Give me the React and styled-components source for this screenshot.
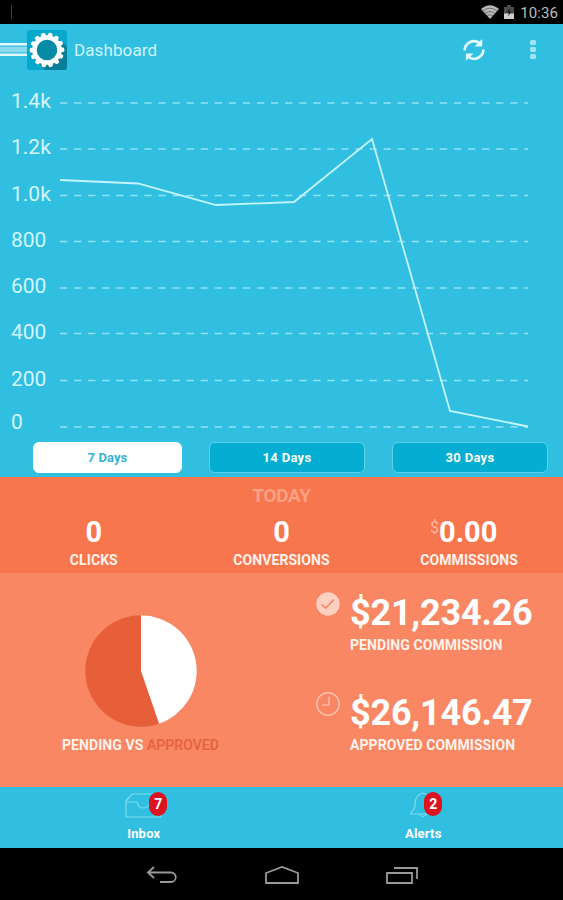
import React from "react"
import styled, { createGlobalStyle } from "styled-components"

const GlobalStyle = createGlobalStyle`
  * { box-sizing: border-box; }
  body {
    margin: 0;
    font-family: Roboto, "Noto Sans", sans-serif;
    color: #fff;
    background: #000;
  }
`

const Screen = styled.main`
  display: flex;
  flex-direction: column;
  width: 563px;
  height: 900px;
  overflow: hidden;
`

const StatusBar = styled.div`
  height: 23.5px;
  padding: 0 5px 0 11px;
  display: flex;
  align-items: center;
  justify-content: space-between;
  background: #000;
`

const StatusTick = styled.span`
  width: 1px;
  height: 14px;
  background: #3c3c3c;
`

const StatusIcons = styled.div`
  display: flex;
  align-items: center;
  height: 22px;
`

const Clock = styled.span`
  margin-left: 6px;
  padding-top: 2px;
  font-size: 15px;
  line-height: 20px;
  letter-spacing: 0.1px;
  color: #bdbdbd;
`

const Header = styled.header`
  height: 53.5px;
  display: flex;
  align-items: center;
  padding-bottom: 1px;
  background: #31bfe1;
`

const Drawer = styled.div`
  width: 27px;
  height: 13px;
  display: flex;
  flex-direction: column;
  justify-content: space-between;
  background: #8adbf0;
  border-top: 2px solid #e2f8ff;
  border-bottom: 2px solid #e2f8ff;

  &::before, &::after {
    content: "";
    height: 1px;
    margin-top: 1px;
    background: #4cc4e3;
  }
  &::after {
    margin: 0 0 1px;
  }
`

const Title = styled.h1`
  flex: 1;
  margin: 0 0 0 7px;
  padding-top: 1px;
  font-size: 17px;
  font-weight: 400;
  letter-spacing: 0.1px;
  color: #d0f5ff;
`

const Actions = styled.div`
  display: flex;
  align-items: center;
  gap: 45px;
  padding-right: 27px;
`

const Dots = styled.div`
  display: grid;
  gap: 2px;

  span {
    width: 6px;
    height: 5px;
    border-radius: 1.5px;
    background: #9fe4f5;
  }
`

const Chart = styled.section`
  display: flex;
  height: 360px;
  background: #31bfe1;
`

const Axis = styled.div`
  width: 60px;
  padding: 1px 0 0 11px;
`

const AxisLabel = styled.div`
  height: 46.3px;
  line-height: 47px;
  font-size: 21px;
  color: #d3f6ff;

  &:last-child {
    margin-top: -3px;
  }
`

const Ranges = styled.div`
  height: 39.5px;
  padding: 5px 15px 0 33px;
  display: grid;
  grid-template-columns: 149px 156px 156px;
  justify-content: space-between;
  align-items: start;
  background: #31bfe1;
`

const RangeButton = styled.button`
  height: 31px;
  padding: 0;
  border: 1px solid ${p => p.$active ? "#fff" : "#5dd0ea"};
  border-radius: 6px;
  background: ${p => p.$active ? "#fff" : "#03aed2"};
  color: ${p => p.$active ? "#31b3d2" : "#fff"};
  font: 700 13px Roboto, sans-serif;
  letter-spacing: ${p => p.$active ? "0.1px" : "0.3px"};
`

const Today = styled.section`
  height: 96.5px;
  padding-top: 9px;
  background: #f8764d;
  text-align: center;
`

const TodayTitle = styled.h2`
  margin: 0;
  font-size: 19px;
  line-height: 20px;
  font-weight: 700;
  letter-spacing: -0.3px;
  color: #fba184;
`

const Stats = styled.div`
  display: grid;
  grid-template-columns: repeat(3, 1fr);
  margin-top: 12px;
`

const StatValue = styled.div`
  display: flex;
  justify-content: center;
  font-size: 29px;
  line-height: 29px;
  font-weight: 700;
  ${p => p.$currency && "padding-right: 11px;"}

  sup {
    font-size: 16px;
    line-height: 20px;
    font-weight: 400;
    color: #fdb49d;
  }
`

const Label = styled.div`
  font-size: 14px;
  line-height: 16px;
  font-weight: 700;
  letter-spacing: 0.07px;
  color: #fff2ec;
`

const StatLabel = styled(Label)`
  margin-top: 5px;
`

const Summary = styled.section`
  height: 214px;
  display: grid;
  grid-template-columns: 316px 1fr;
  background: #f98763;
`

const PieBox = styled.div`
  padding: 41.5px 35px 0 0;
  display: flex;
  flex-direction: column;
  align-items: center;
`

const PieLabel = styled(Label)`
  margin-top: 10px;

  em {
    font-style: normal;
    font-weight: 500;
    color: #e4623d;
  }
`

const Totals = styled.div`
  padding-top: 18.5px;
`

const Total = styled.div`
  height: 100px;
  display: flex;
  align-items: flex-start;
  gap: 10px;
`

const Amount = styled.div`
  height: 45px;
  line-height: 43px;
  font-size: 36px;
  font-weight: 700;
  letter-spacing: -0.2px;
`

const Tabs = styled.nav`
  height: 61px;
  display: grid;
  grid-template-columns: 1fr 1fr;
  padding: 4px 0 0 4px;
  background: #31bfe1;
`

const Tab = styled.a`
  display: flex;
  flex-direction: column;
  align-items: center;
  font-size: 13px;
  line-height: 17px;
  font-weight: 700;
  letter-spacing: 0.2px;
`

const TabIcon = styled.div`
  position: relative;
  height: 34px;
  width: ${p => p.$width}px;

  svg {
    display: block;
  }
`

const Badge = styled.span`
  position: absolute;
  top: 1px;
  left: ${p => p.$left}px;
  width: 18px;
  height: 24px;
  border-radius: 9px;
  background: #dc1320;
  font-size: 14px;
  line-height: 24px;
  text-align: center;
`

const SystemNav = styled.div`
  flex: 1;
  padding-top: 2px;
  display: flex;
  align-items: center;
  justify-content: center;
  gap: 85px;
  background: #000;
`

const ticks = ["1.4k", "1.2k", "1.0k", "800", "600", "400", "200", "0"]
const gridLines = [26, 72, 118.5, 164.5, 211, 256.5, 303.5, 350]
const points = "0,103 78,106.5 156,128 234,125 312,62 390,334 468,349.5"

const stats = [
  { value: "0", label: "CLICKS" },
  { value: "0", label: "CONVERSIONS" },
  { value: "0.00", label: "COMMISSIONS", currency: "$" },
]

const gearTeeth = Array.from({ length: 14 }, (_, i) => i * (360 / 14))

const GearLogo = () => (
  <svg width="40" height="40" viewBox="0 0 40 40">
    <rect width="40" height="40" rx="3" fill="#06a8cc" />
    <path d="M33 10L40 17V37Q40 40 37 40H18L11 33Z" fill="#087f99" />
    <circle cx="20" cy="20" r="14.8" fill="#fff" />
    {gearTeeth.map(a => (
      <path key={a} d="M17.2 7L18.1 3Q20 2.1 21.9 3L22.8 7Z" fill="#fff" transform={`rotate(${a + 12} 20 20)`} />
    ))}
    <circle cx="20" cy="20" r="10.3" fill="#058ba6" />
  </svg>
)

const SyncIcon = () => (
  <svg width="22" height="22" viewBox="0 0 22 22" fill="none" stroke="#e2faff" strokeWidth="2.6">
    <path d="M1.6 11.5A9.4 9.4 0 0 1 16.5 4" />
    <path d="M20.4 10.5A9.4 9.4 0 0 1 5.5 18" />
    <path d="M19.2 0V7.5H11.5Z" fill="#e2faff" stroke="none" />
    <path d="M2.8 22V14.5H10.5Z" fill="#e2faff" stroke="none" />
  </svg>
)

const WifiIcon = () => (
  <svg width="18" height="14" viewBox="0 0 18 14">
    <path d="M0 4Q9 -3.6 18 4L9 14Z" fill="#b8b8b8" />
    <path d="M1.7 6Q9 0.4 16.3 6M3.8 8.5Q9 4.6 14.2 8.5M6 10.8Q9 8.8 12 10.8" fill="none" stroke="#555" strokeWidth=".7" />
  </svg>
)

const BatteryIcon = styled(({ className }) => (
  <svg className={className} width="10" height="14" viewBox="0 0 10 14">
    <path d="M3 0H7V2H10V14H0V2H3Z" fill="#4b4b4b" />
    <path d="M0 8.5H10V14H0Z" fill="#cfcfcf" />
    <path d="M5.8 3L3 7.5H5L4.2 11.5L7.3 6.5H5.3Z" fill="#111" />
  </svg>
))`
  margin-left: 5px;
`

const Pie = () => (
  <svg width="112" height="112" viewBox="0 0 112 112">
    <circle cx="56" cy="56" r="55.7" fill="#e75f38" />
    <path d="M56 56V0.3A55.7 55.7 0 0 1 74.1 108.7Z" fill="#fff" />
  </svg>
)

const CheckIcon = () => (
  <svg width="24" height="24" viewBox="0 0 24 24">
    <circle cx="12" cy="12" r="11.7" fill="#fdd0c1" />
    <path d="M5.5 12.5L9.5 16.2L18 7.5" fill="none" stroke="#f98763" strokeWidth="1.6" />
  </svg>
)

const ClockIcon = () => (
  <svg width="24" height="24" viewBox="0 0 24 24" fill="none" stroke="#fdcebd" strokeWidth="1.2">
    <circle cx="12" cy="12" r="11.2" />
    <path d="M13 4.5V13H6" />
  </svg>
)

const App = () => {
  return (
    <>
      <GlobalStyle />
      <Screen>
        <StatusBar>
          <StatusTick />
          <StatusIcons>
            <WifiIcon />
            <BatteryIcon />
            <Clock>10:36</Clock>
          </StatusIcons>
        </StatusBar>

        <Header>
          <Drawer />
          <GearLogo />
          <Title>Dashboard</Title>
          <Actions>
            <SyncIcon />
            <Dots><span /><span /><span /></Dots>
          </Actions>
        </Header>

        <Chart>
          <Axis>
            {ticks.map(t => <AxisLabel key={t}>{t}</AxisLabel>)}
          </Axis>
          <svg width="469" height="360" viewBox="0 0 469 360" fill="none">
            {gridLines.map(y => (
              <path key={y} d={`M0 ${y}H468`} stroke="#93e2f5" strokeWidth="1.6" strokeDasharray="7.2 6.87" />
            ))}
            <polyline points={points} stroke="#c3f4ff" strokeWidth="1.8" />
          </svg>
        </Chart>

        <Ranges>
          <RangeButton $active>7 Days</RangeButton>
          <RangeButton>14 Days</RangeButton>
          <RangeButton>30 Days</RangeButton>
        </Ranges>

        <Today>
          <TodayTitle>TODAY</TodayTitle>
          <Stats>
            {stats.map(s => (
              <div key={s.label}>
                <StatValue $currency={s.currency}>
                  {s.currency && <sup>{s.currency}</sup>}
                  {s.value}
                </StatValue>
                <StatLabel>{s.label}</StatLabel>
              </div>
            ))}
          </Stats>
        </Today>

        <Summary>
          <PieBox>
            <Pie />
            <PieLabel>PENDING VS <em>APPROVED</em></PieLabel>
          </PieBox>
          <Totals>
            <Total>
              <CheckIcon />
              <div>
                <Amount>$21,234.26</Amount>
                <Label>PENDING COMMISSION</Label>
              </div>
            </Total>
            <Total>
              <ClockIcon />
              <div>
                <Amount>$26,146.47</Amount>
                <Label>APPROVED COMMISSION</Label>
              </div>
            </Total>
          </Totals>
        </Summary>

        <Tabs>
          <Tab>
            <TabIcon $width={37}>
              <svg width="37" height="28" viewBox="0 0 37 28" fill="none" stroke="#7edbf0" strokeWidth="1.2">
                <path d="M1 10L7 3H30L36 10V26H1ZM1 11H12Q13 17 18.5 17Q24 17 25 11H36" />
              </svg>
              <Badge $left={24}>7</Badge>
            </TabIcon>
            Inbox
          </Tab>
          <Tab>
            <TabIcon $width={26}>
              <svg width="26" height="28" viewBox="0 0 26 28" fill="none" stroke="#7edbf0" strokeWidth="1.2">
                <path d="M13 2Q5 4 5 13Q5 19 1 21V23H25V21Q21 19 21 13Q21 4 13 2ZM9 23Q13 28 17 23" />
              </svg>
              <Badge $left={14}>2</Badge>
            </TabIcon>
            Alerts
          </Tab>
        </Tabs>

        <SystemNav>
          <svg width="34" height="20" viewBox="0 0 34 20" fill="none" stroke="#999" strokeWidth="1.8">
            <path d="M9 2L3 7.5L9 13M3 7.5H26A4.6 4.6 0 0 1 26 17H15" />
          </svg>
          <svg width="36" height="20" viewBox="0 0 36 20" fill="none" stroke="#999" strokeWidth="1.8">
            <path d="M2 18V8L18 2L34 8V18Z" />
          </svg>
          <svg width="34" height="20" viewBox="0 0 34 20" fill="none" stroke="#999" strokeWidth="1.8">
            <path d="M2 8H27V18H2ZM9 3H32V14" />
          </svg>
        </SystemNav>
      </Screen>
    </>
  )
}

export default App
